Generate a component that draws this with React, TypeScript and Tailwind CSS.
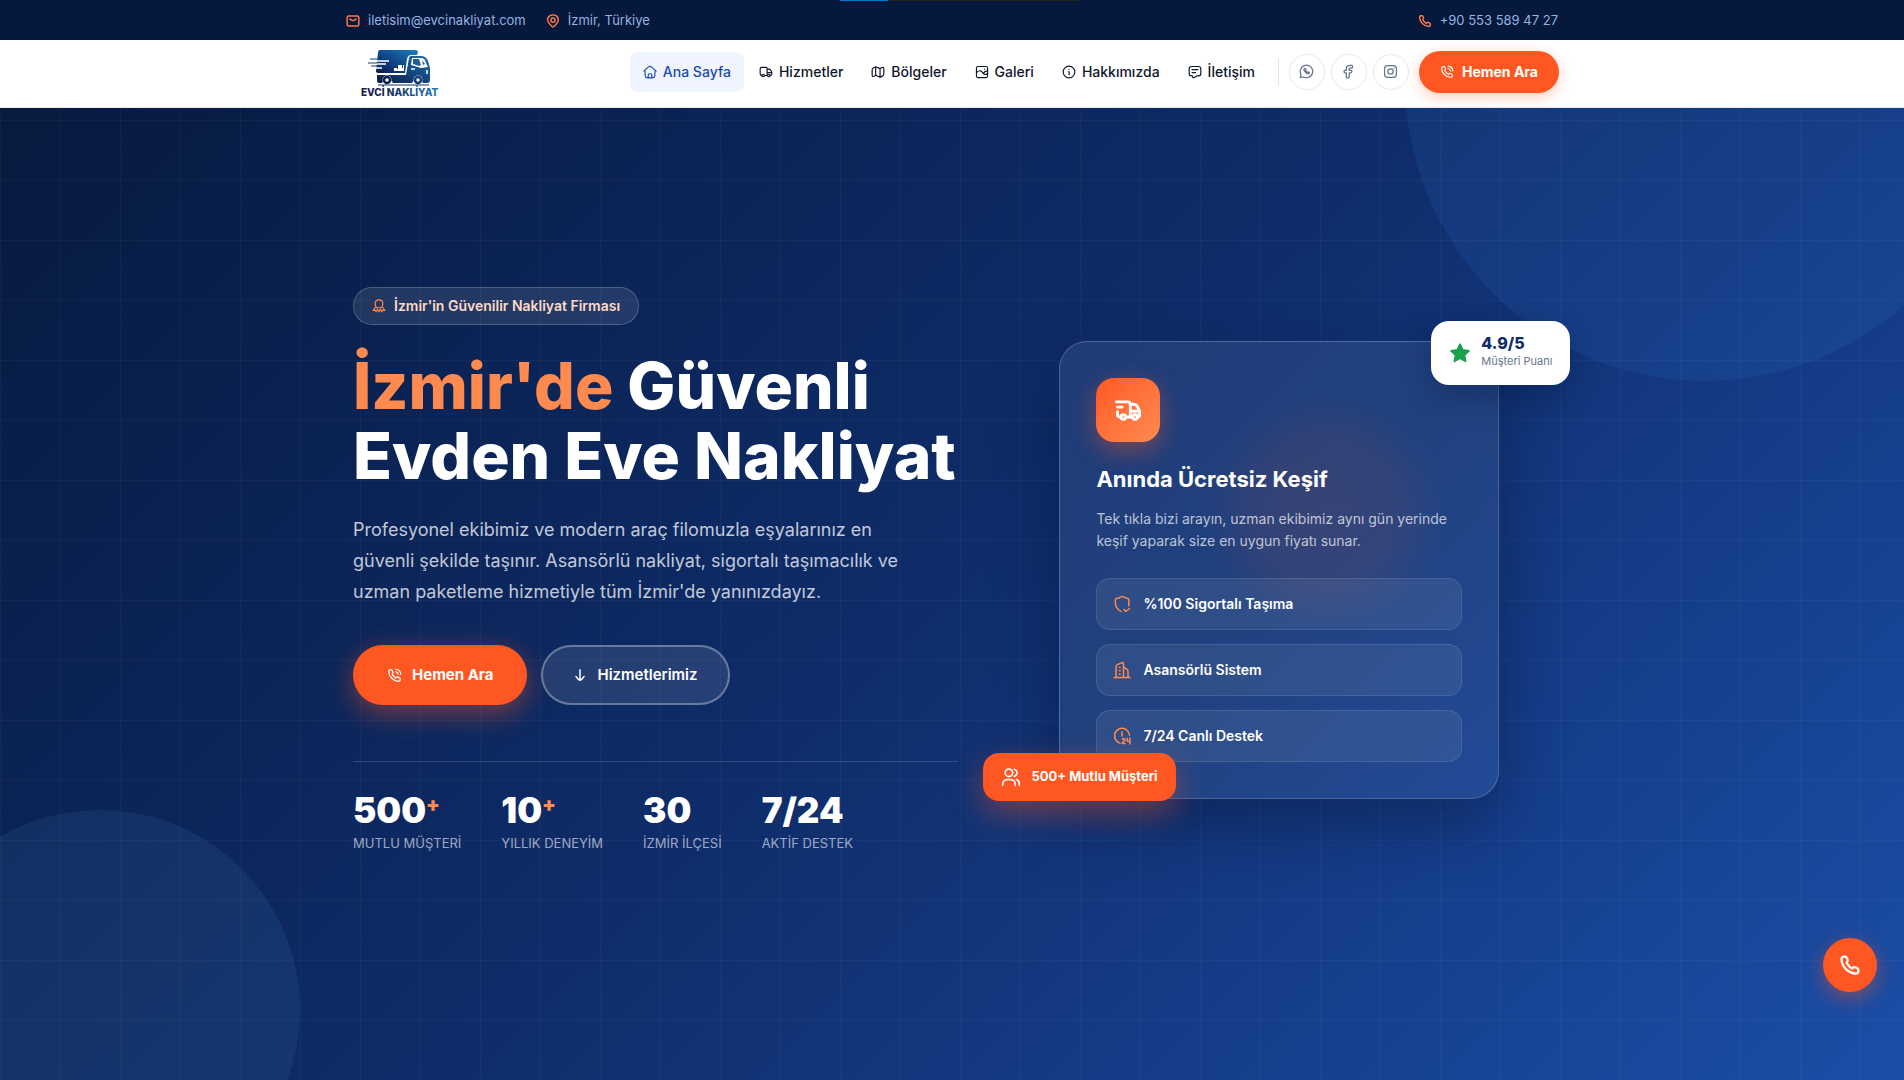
import type { ReactNode } from 'react'

type IconProps = { className?: string; width?: number }

function Icon({ className = 'size-4', width = 2, children }: IconProps & { children: ReactNode }) {
  return (
    <svg
      viewBox="0 0 24 24"
      className={`shrink-0 ${className}`}
      fill="none"
      stroke="currentColor"
      strokeWidth={width}
      strokeLinecap="round"
      strokeLinejoin="round"
      aria-hidden="true"
    >
      {children}
    </svg>
  )
}

const PHONE_PATH =
  'M9.2 5.9 8.6 4.4C8.1 3.3 7.8 2.9 6.9 2.9H4.6C3.4 3.2 2.7 4.2 2.7 5.5 3 13.9 10.1 21 18.5 21.3c1.3 0 2.4-.8 2.6-2.1v-2.1c0-.9-.4-1.3-1.5-1.8l-1.7-.8c-1.2-.5-1.8-.3-2.6.6l-.7.8c-.7.6-4.9-3.6-6.3-6.3-.1-.3.3-.7.7-1 .8-.7.8-1.4.2-2.7Z'

const Mail = (p: IconProps) => (
  <Icon {...p}>
    <rect x="2" y="3.5" width="20" height="17" rx="2.5" />
    <path d="m6.5 8.5 3.2 2.1c1.8 1.1 2.8 1.1 4.6 0l3.2-2.1" />
  </Icon>
)
const Pin = (p: IconProps) => (
  <Icon {...p}>
    <path d="M13.6 21.4a2.3 2.3 0 0 1-3.2 0C6.2 17.4.7 13 3.4 6.7 4.9 3.3 8.3 1.5 12 1.5s7.1 1.8 8.6 5.2c2.7 6.3-2.8 10.7-7 14.7Z" />
    <circle cx="12" cy="10.5" r="3.5" />
  </Icon>
)
const Phone = (p: IconProps) => (
  <Icon {...p}>
    <path d={PHONE_PATH} />
  </Icon>
)
const PhoneCall = (p: IconProps) => (
  <Icon {...p}>
    <path d={PHONE_PATH} />
    <path d="M14 2c4.7.4 7.6 3.3 8 8M14 6c2.500.4 3.700 1.600 4 4" />
  </Icon>
)
const Home = (p: IconProps) => (
  <Icon {...p}>
    <path d="M3.500 10.500V14c0 3.800 0 5.600 1 6.800S7.500 22 11 22h2c3.500 0 5.500 0 6.500-1.200s1-3 1-6.800v-3.500" />
    <path d="M1.500 10.500 9.500 3.300c2-1.700 3-1.700 5 0l8 7.200M9 22v-5c0-1.400.6-2 2-2h2c1.400 0 2 .6 2 2v5" />
  </Icon>
)
const Truck = (p: IconProps) => (
  <Icon {...p}>
    <circle cx="7" cy="18" r="2.200" />
    <circle cx="17" cy="18" r="2.200" />
    <path d="M4.800 18C2.500 18 2 17.500 2 15V6.500C2 4.500 2.500 4 4.500 4h7C13.500 4 14 4.500 14 6.500V18H9.200M14 7h3c1.500 0 2 .4 2.800 1.700L22 12.500V16c0 1.600-.5 2-2.800 2M14 13h8" />
  </Icon>
)
const MapIcon = (p: IconProps) => (
  <Icon {...p}>
    <path d="M5.300 4.200 4 5c-1.500.9-2 1.500-2 3v9.500c0 2.300 1.100 2.800 3 1.800l3-1.700 7.500 3.500 4-2c2-1 2.500-1.700 2.500-3.600V6c0-2.300-1.300-2.600-3-1.700l-3.500 1.900L8 3 5.300 4.200ZM8 3v14.500M15.500 6.500V21" />
  </Icon>
)
const ImageIcon = (p: IconProps) => (
  <Icon {...p}>
    <rect x="2.500" y="2.500" width="19" height="19" rx="2.500" />
    <path d="M3 12.500c5-4.500 8-2.500 10.500 1 2 2.800 5 3.500 8 1.500M14.500 14c1.500-2.500 4-4 7-3.500" />
    <path d="M16.500 7v.1" />
  </Icon>
)
const Info = (p: IconProps) => (
  <Icon {...p}>
    <circle cx="12" cy="12" r="10" />
    <path d="M11 11.500h1.300v5M12 7.500v.1" />
  </Icon>
)
const Message = (p: IconProps) => (
  <Icon {...p}>
    <path d="M7.500 18.500H6c-2.500 0-4-1.300-4-4.500V7c0-3.200 1.500-4.500 4-4.500h12c2.500 0 4 1.300 4 4.500v7c0 3.200-1.500 4.500-4 4.500h-2.500c-1.500 0-2.500 1.500-4 2.500-2 1.500-4 1-4-2.500ZM7 8h10M7 13h6" />
  </Icon>
)
const WhatsApp = (p: IconProps) => (
  <Icon {...p}>
    <path d="M12 22a10 10 0 1 0-8.700-5L2.200 21.800 7.200 20.800A10 10 0 0 0 12 22Z" />
    <path d="M8.500 7.500c-.9 1.100-.6 3.200 1.600 5.500s4.800 3.300 6.200 2.300c.8-.7.600-1.500-.9-2.300-.9-.5-1.300-.1-1.900.4-1.300-.6-2-1.400-2.700-2.600.5-.6.800-1 .4-2-.6-1.500-1.700-2.400-2.700-1.300Z" />
  </Icon>
)
const Facebook = (p: IconProps) => (
  <Icon {...p}>
    <path d="M6.200 10.300c-1 0-1.200.2-1.200 1.200v1.300c0 1 .2 1.200 1.200 1.200h2.300v7c0 .8.200 1 1.200 1H12c.9 0 1.100-.2 1.100-1.100V14h2.600c.8 0 1-.1 1.200-.9l.5-1.600c.2-.9-.1-1.200-1.100-1.200h-3.200V7.700c0-.7.500-1.100 1.200-1.100h2.900c.9 0 1.100-.3 1.100-1.200V3.200c0-.9-.2-1.200-1.100-1.200h-3c-3.300 0-5.700 2.300-5.700 5.700v2.600H6.200Z" />
  </Icon>
)
const Instagram = (p: IconProps) => (
  <Icon {...p}>
    <rect x="2.500" y="2.500" width="19" height="19" rx="5" />
    <circle cx="12" cy="12" r="4.300" />
    <path d="M17.500 6.500v.1" />
  </Icon>
)
const Award = (p: IconProps) => (
  <Icon {...p}>
    <path d="M12 1.500c-4 0-6.500 2.800-6.500 6.800 0 2.700.8 4.600 2 6.700h9c1.200-2.100 2-4 2-6.700 0-4-2.500-6.800-6.500-6.800Z" />
    <path d="M6.500 14c-1.700 1.500-3.200 3-4.500 5.500l3.400-.3L7 22l2.500-4.500L12 22l2.500-4.500L17 22l1.600-2.800 3.400.3c-1.300-2.500-2.800-4-4.500-5.500" />
  </Icon>
)
const ArrowDown = (p: IconProps) => (
  <Icon {...p}>
    <path d="M12 3v18M5 14.500c1.500 2.500 5 6 7 6.500 2-.5 5.500-4 7-6.500" />
  </Icon>
)
const FastTruck = (p: IconProps) => (
  <Icon {...p}>
    <circle cx="8" cy="18" r="2" />
    <circle cx="18" cy="18" r="2" />
    <path d="M2 5h10c1.500 0 2 .5 2 2v11h-4M14 7h3c1.500 0 2.200.6 3 2l2 4v3c0 1.500-.5 2-2 2M14 13h8M3 9.500h4M3 13.500V16c0 1.500.8 2 3 2M14 18h2" />
  </Icon>
)
const Shield = (p: IconProps) => (
  <Icon {...p}>
    <path d="M21 14.500c.1-1.500.2-3 .2-4.800V6.500c0-1.200-.5-1.600-1.500-1.800-2.500-.4-4-1-6-2.200-1-.7-2-.7-3 0-2 1.200-4 1.900-6 2.200-1.200.2-1.600.6-1.600 1.800v3.200c0 6.300 3 10 7.600 12.100M14.500 19.500l2.500 2.500 5-4" />
  </Icon>
)
const Building = (p: IconProps) => (
  <Icon {...p}>
    <path d="M1.500 22h21M4 22V8c0-2 .7-2.800 2.500-3.500L12 2.300c1.500-.6 2 .1 2 1.700v18M14 8l4 2.500c1.500 1 2 1.800 2 3.500v8M8.500 8.500h1M8.500 13h1M8.500 17.500h1" />
  </Icon>
)
const Clock24 = (p: IconProps) => (
  <Icon {...p}>
    <path d="M9.500 21.500A10 10 0 1 1 22 11M12 6.500V12M12.500 16.500c.5-1.500 3.500-1.300 3.500.5 0 1.500-3.500 2.500-3.500 5H16M19 15v4h3.500M22.500 15v7.500" />
  </Icon>
)
const Users = (p: IconProps) => (
  <Icon {...p}>
    <circle cx="9.500" cy="7" r="4.500" />
    <path d="M16 2.700a4.500 4.500 0 0 1 0 8.600M2 22v-1.500c0-3.500 3-5.500 7.500-5.500s7.500 2 7.500 5.500V22M18.500 15c2.500.7 3.500 2.500 3.500 5v2" />
  </Icon>
)

function Logo() {
  return (
    <svg viewBox="0 0 82 50" className="h-[50px] w-[82px]" role="img" aria-label="Evci Nakliyat">
      <defs>
        <linearGradient id="truck" x1="0" y1="1" x2="1" y2="0">
          <stop offset="0" stopColor="#0a1a48" />
          <stop offset="0.5" stopColor="#10498c" />
          <stop offset="1" stopColor="#1c80bd" />
        </linearGradient>
        <linearGradient id="cab" x1="0" y1="1" x2="1" y2="0">
          <stop offset="0" stopColor="#0a1a48" />
          <stop offset="1" stopColor="#1d6fae" />
        </linearGradient>
        <linearGradient id="word" x1="0" x2="1">
          <stop offset="0.25" stopColor="#14204e" />
          <stop offset="1" stopColor="#2279b5" />
        </linearGradient>
      </defs>
      <path d="M21 1h35q3 0 3 2l-1 3h-6q-3 0-4 4l-2 14H20q-3 0-3-2l2-18q0-3 2-3Z" fill="url(#truck)" />
      <path d="M52 7h10q5 0 7 5l2 7v12q0 3-3 3h-4a6 6 0 0 0-11 0H34a6 6 0 0 0-11 0h-3q-2 0-2-3v-5h29l3-17q0-2 2-2Z" fill="url(#cab)" />
      <path d="M53 9h9q4 0 5 5l2 4-7 1-10-3Z" fill="#fff" />
      <path d="m54 10 6 0 2 6-2 1-6-2ZM63 11l3 4-2 1Z" fill="#1c5c98" />
      <path d="M68 21v4M52 20h4" stroke="#fff" strokeWidth="1.5" />
      <path d="M12 12h18M10 15h17M14 19h9" stroke="#fff" strokeWidth="1.5" />
      <path d="M11 10h15M9 14h9M12 17h10" stroke="#12437d" strokeWidth="1.2" />
      <path d="M35 22v-3h3v1h1v-4h4v3h1v-3h1v6Z" fill="#fff" />
      <circle cx="28" cy="31" r="4.500" fill="#fff" />
      <circle cx="28" cy="31" r="3" fill="none" stroke="#101e4d" strokeWidth="2.500" />
      <circle cx="59" cy="31" r="4.500" fill="#fff" />
      <circle cx="59" cy="31" r="3" fill="none" stroke="#123b72" strokeWidth="2.500" />
      <path d="M19 36h51" stroke="#143564" />
      <text x="2" y="47" fontFamily="Inter, sans-serif" fontSize="10" fontWeight="800" fill="url(#word)">
        EVCİ NAKLİYAT
      </text>
    </svg>
  )
}

const navItems = [
  { label: 'Ana Sayfa', icon: Home, active: true },
  { label: 'Hizmetler', icon: Truck },
  { label: 'Bölgeler', icon: MapIcon },
  { label: 'Galeri', icon: ImageIcon },
  { label: 'Hakkımızda', icon: Info },
  { label: 'İletişim', icon: Message },
]

const socials = [
  { label: 'WhatsApp', icon: WhatsApp },
  { label: 'Facebook', icon: Facebook },
  { label: 'Instagram', icon: Instagram },
]

const stats = [
  { value: '500', plus: true, label: 'MUTLU MÜŞTERİ' },
  { value: '10', plus: true, label: 'YILLIK DENEYİM' },
  { value: '30', label: 'İZMİR İLÇESİ' },
  { value: '7/24', label: 'AKTİF DESTEK' },
]

const features = [
  { label: '%100 Sigortalı Taşıma', icon: Shield },
  { label: 'Asansörlü Sistem', icon: Building },
  { label: '7/24 Canlı Destek', icon: Clock24 },
]

function TopBar() {
  return (
    <div className="bg-[#06183b] text-[13px] text-[#93b4e3]">
      <div className="mx-auto flex h-10 max-w-[1280px] items-center gap-5 px-[34px] pt-0.5">
        <a href="#mail" className="flex items-center gap-2">
          <Mail className="size-[14px] text-[#ff7a45]" width={2.5} />
          iletisim@evcinakliyat.com
        </a>
        <span className="flex items-center gap-2">
          <Pin className="size-[14px] text-[#ff7a45]" width={2.5} />
          İzmir, Türkiye
        </span>
        <a href="#tel" className="ml-auto flex items-center gap-2">
          <Phone className="size-[14px] text-[#ff7a45]" width={2.5} />
          +90 553 589 47 27
        </a>
      </div>
    </div>
  )
}

function NavBar() {
  return (
    <header className="relative z-10 border-b border-[#e2e8f0] bg-white">
      <div className="mx-auto flex h-[67px] max-w-[1280px] items-center justify-between px-[33px]">
        <a href="#" className="ml-[14px]">
          <Logo />
        </a>
        <div className="mb-1 flex items-center">
          <nav className="flex gap-0.5">
            {navItems.map(({ label, icon: I, active }) => (
              <a
                key={label}
                href="#"
                className={`flex h-10 items-center gap-1.5 rounded-lg px-[13px] text-sm font-medium ${
                  active ? 'bg-[#eff4ff] text-[#1b4ba8]' : 'text-[#0f172a]'
                }`}
              >
                <I className="size-[14px]" />
                {label}
              </a>
            ))}
          </nav>
          <div className="mx-2.5 h-7 w-px bg-[#e2e8f0]" />
          <div className="flex gap-1.5">
            {socials.map(({ label, icon: I }) => (
              <a
                key={label}
                href="#"
                aria-label={label}
                className="flex size-9 items-center justify-center rounded-full border border-[#e5e9f2] text-[#64748b]"
              >
                <I className="size-[15px]" />
              </a>
            ))}
          </div>
          <button className="ml-2.5 flex h-[42px] items-center gap-2 rounded-full bg-[#ff5722] px-[21px] text-sm font-bold text-white shadow-[0_4px_14px_rgba(255,87,34,0.3)]">
            <PhoneCall className="size-[14px]" />
            Hemen Ara
          </button>
        </div>
      </div>
    </header>
  )
}

function HeroText() {
  return (
    <div>
      <div className="inline-flex h-[38px] items-center gap-2 rounded-full border border-white/20 bg-white/10 px-[18px] text-sm font-semibold text-[#ffd9c7]">
        <Award className="size-[14px] text-[#ff8a50]" />
        İzmir'in Güvenilir Nakliyat Firması
      </div>
      <h1 className="mt-[26px] text-[64px] leading-[70px] font-extrabold whitespace-nowrap text-white">
        <span className="text-[#ff8a50]">İzmir'de</span> Güvenli
        <br />
        Evden Eve Nakliyat
      </h1>
      <p className="mt-[23px] max-w-[560px] text-lg leading-[31px] text-white/75">
        Profesyonel ekibimiz ve modern araç filomuzla eşyalarınız en güvenli şekilde taşınır. Asansörlü nakliyat,
        sigortalı taşımacılık ve uzman paketleme hizmetiyle tüm İzmir'de yanınızdayız.
      </p>
      <div className="mt-[38px] flex gap-[14px]">
        <button className="flex h-[60px] items-center gap-2.5 rounded-full bg-[#ff5722] px-[34px] text-[15px] font-bold text-white shadow-[0_8px_28px_rgba(255,87,34,0.45)]">
          <PhoneCall className="size-[15px]" />
          Hemen Ara
        </button>
        <button className="flex h-[60px] items-center gap-2.5 rounded-full border-2 border-white/30 bg-white/10 px-[30px] text-[15px] font-semibold text-white">
          <ArrowDown className="size-[14px]" width={2.5} />
          Hizmetlerimiz
        </button>
      </div>
      <div className="mt-14 flex gap-10 border-t border-white/15 pt-7">
        {stats.map(s => (
          <div key={s.label}>
            <div className="text-[35px] leading-[40px] font-black text-white">
              {s.value}
              {s.plus && <sup className="-top-3 text-xl leading-none text-[#ff8a50]">+</sup>}
            </div>
            <div className="mt-[3px] text-[13px] leading-5 text-white/60">{s.label}</div>
          </div>
        ))}
      </div>
    </div>
  )
}

function SurveyCard() {
  return (
    <div className="relative mx-auto w-full max-w-[440px]">
      <div className="rounded-[28px] border border-white/20 bg-linear-to-br from-[#203c77] via-[#20417f] to-[#224a96] p-9 shadow-[0_24px_64px_rgba(4,16,45,0.4)]">
        {/* warm glow behind the card text */}
        <div className="pointer-events-none absolute top-[52px] left-[148px] size-60 rounded-full bg-[radial-gradient(closest-side,rgba(255,87,34,0.1)_0%,rgba(255,87,34,0.08)_60%,transparent_100%)]" />
        <div className="relative flex size-16 items-center justify-center rounded-[18px] bg-linear-135 from-[#ff5722] to-[#ff8a50] text-white shadow-[0_8px_24px_rgba(255,87,34,0.4)]">
          <FastTruck className="size-7" width={2.5} />
        </div>
        <h2 className="relative mt-[22px] text-[22px] leading-[30px] font-bold text-white">Anında Ücretsiz Keşif</h2>
        <p className="relative mt-[14px] text-sm leading-[22px] text-white/70">
          Tek tıkla bizi arayın, uzman ekibimiz aynı gün yerinde keşif yaparak size en uygun fiyatı sunar.
        </p>
        <ul className="relative mt-[26px] space-y-[14px]">
          {features.map(({ label, icon: I }) => (
            <li
              key={label}
              className="flex h-[52px] items-center gap-3 rounded-[14px] border border-white/10 bg-white/[0.07] px-4 text-sm font-semibold text-white"
            >
              <I className="size-[18px] text-[#ff8a50]" />
              {label}
            </li>
          ))}
        </ul>
      </div>
      <div className="absolute -top-5 -right-[71px] flex h-16 items-center gap-2.5 rounded-[18px] bg-white px-[18px] shadow-[0_12px_32px_rgba(4,16,45,0.3)]">
        <svg viewBox="0 0 24 24" className="size-[22px]" fill="#16a34a" stroke="#16a34a" strokeWidth="2" strokeLinejoin="round" aria-hidden="true">
          <path d="m12 2.500 3 6.200 6.700.9-4.900 4.600 1.200 6.800-6-3.300L6 21l1.200-6.800-4.900-4.600 6.700-.9 3-6.200Z" />
        </svg>
        <div className="pb-1">
          <div className="text-base leading-5 font-extrabold text-[#0f2d6b]">4.9/5</div>
          <div className="text-[11px] leading-4 text-[#64748b]">Müşteri Puanı</div>
        </div>
      </div>
      <div className="absolute -bottom-0.5 -left-[76px] flex h-12 items-center gap-2.5 rounded-2xl bg-[#ff5722] px-[18px] text-[13px] font-bold whitespace-nowrap text-white shadow-[0_12px_32px_rgba(255,87,34,0.4)]">
        <Users className="size-5" />
        500+ Mutlu Müşteri
      </div>
    </div>
  )
}

export default function App() {
  return (
    <div className="flex min-h-screen flex-col font-['Inter',sans-serif]">
      <TopBar />
      <NavBar />
      <main className="relative flex flex-1 items-center overflow-hidden bg-linear-135 from-[#071a3f] via-[#0f2d6b] to-[#1b4ea8] pb-12">
        <div className="absolute -top-[327px] -right-[101px] size-[600px] rounded-full bg-[#2f6fc8]/15" />
        <div className="absolute -bottom-[130px] -left-[100px] size-[400px] rounded-full bg-[#4b8fc8]/12" />
        <div className="absolute inset-0 bg-[linear-gradient(rgba(255,255,255,0.03)_1px,transparent_1px),linear-gradient(90deg,rgba(255,255,255,0.03)_1px,transparent_1px)] bg-[size:60px_60px] bg-[position:0_-48px]" />
        <div className="relative mx-auto grid w-full max-w-[1202px] grid-cols-[1.05fr_0.95fr] items-center gap-12 pl-0.5">
          <HeroText />
          <SurveyCard />
        </div>
      </main>
      <div className="absolute top-0 left-[840px] z-20 h-px w-60 bg-[#222]">
        <div className="h-px w-12 bg-[#0078d4]" />
      </div>
      <button
        aria-label="Hemen Ara"
        className="fixed right-[27px] bottom-[88px] z-20 flex size-[54px] items-center justify-center rounded-full bg-[#ff5722] text-white shadow-[0_6px_20px_rgba(255,87,34,0.45)]"
      >
        <Phone className="size-[22px]" width={2.5} />
      </button>
    </div>
  )
}
